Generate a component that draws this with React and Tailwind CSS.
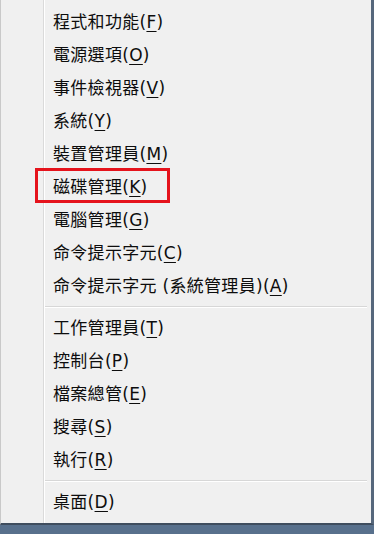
import React from 'react';

const groups = [
  [
    { label: '程式和功能', key: 'F' },
    { label: '電源選項', key: 'O' },
    { label: '事件檢視器', key: 'V' },
    { label: '系統', key: 'Y' },
    { label: '裝置管理員', key: 'M' },
    { label: '磁碟管理', key: 'K' },
    { label: '電腦管理', key: 'G' },
    { label: '命令提示字元', key: 'C' },
    { label: '命令提示字元 (系統管理員)', key: 'A' },
  ],
  [
    { label: '工作管理員', key: 'T' },
    { label: '控制台', key: 'P' },
    { label: '檔案總管', key: 'E' },
    { label: '搜尋', key: 'S' },
    { label: '執行', key: 'R' },
  ],
  [{ label: '桌面', key: 'D' }],
];

const MenuItem = ({ label, hotkey }) => (
  <div className="h-[33px] flex items-center pl-[8px] pt-[2px] text-[17px] leading-none tracking-[0.3px] text-[#0d0d0d]">
    <span>
      {label}(<span className="underline underline-offset-[3px]">{hotkey}</span>)
    </span>
  </div>
);

const Separator = () => (
  <div className="h-[9px] flex flex-col justify-center pr-[4px]">
    <div className="h-px bg-[#d7d7d7]" />
    <div className="h-px bg-white" />
  </div>
);

export default function App() {
  return (
    <div
      className="w-[374px] h-[534px] bg-[#58708c] overflow-hidden"
      style={{ fontFamily: '"DejaVu Sans", "Noto Sans CJK TC", sans-serif' }}
    >
      <div className="relative w-[374px] h-[525px] bg-[#f0f0f0] border-l border-l-[#c9c9c9] border-r-[3px] border-r-[#56677c] border-b-2 border-b-[#3f4d5e] flex">
        {/* icon gutter */}
        <div className="w-[43px] shrink-0 border-r border-r-[#dadada]" />
        <div className="w-px bg-white shrink-0" />

        <div className="flex-1 pt-[5px]">
          {groups.map((group, gi) => (
            <React.Fragment key={gi}>
              {gi > 0 && <Separator />}
              {group.map((item) => (
                <MenuItem key={item.label} label={item.label} hotkey={item.key} />
              ))}
            </React.Fragment>
          ))}
        </div>

        {/* highlight box around 磁碟管理 */}
        <div className="absolute left-[34px] top-[168px] w-[135px] h-[35px] border-[3px] border-[#e5131c]" />
      </div>
    </div>
  );
}
